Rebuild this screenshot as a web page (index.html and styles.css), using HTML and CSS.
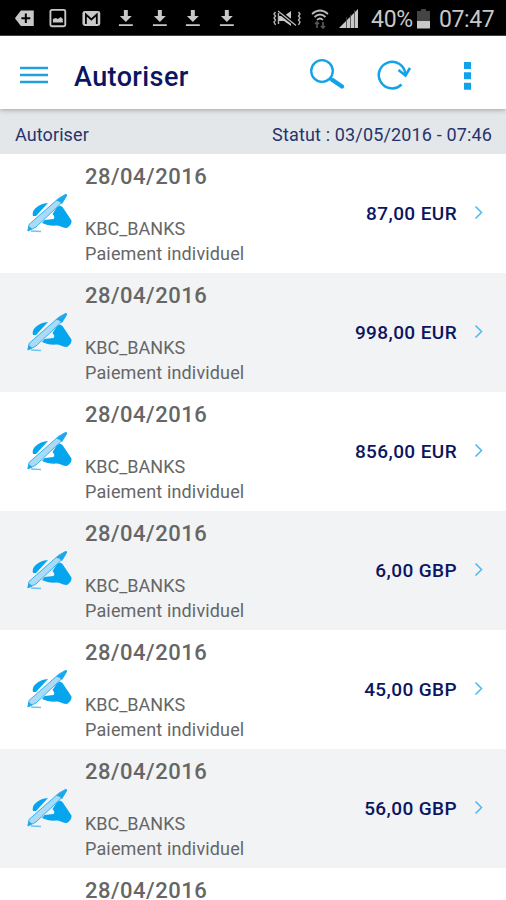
FILE: index.html
```html
<!DOCTYPE html>
<html lang="fr">
<head>
    <meta charset="utf-8">
    <title>Autoriser</title>
    <link rel="stylesheet" href="styles.css">
</head>
<body>
    <!-- Shared icons -->
    <svg class="sprite" width="0" height="0">
        <symbol id="download" viewBox="0 0 34 20">
            <path d="M15 2h4v6h4l-6 6-6-6h4z"/>
            <path d="M10 16.4h14v1.8H10z"/>
        </symbol>
        <symbol id="sign" viewBox="0 0 46 42">
            <path d="M7 23C5 17 12 11 22 10L10 23z" fill="#06a6ee"/>
            <path d="M31 14l3-1.500 2.500 1.500L45.500 27.500q.5 4-4.500 7.500c-4 0-6-2-10-2.500-6 .5-11-.5-15-2.500l2.500-3 9-1q2-2-1-5z" fill="#06a6ee"/>
            <path d="M3 31.500L33 5l6.500-3.500 1 1-3.500 6L10 34l-8 4z" fill="#a9daf8" stroke="#35b2ef" stroke-width="1"/>
            <path d="M30 7.500l10-6.500q1.500 0 1 1.500L36 11q-2-3-6-3.500zM1.500 38l1-5 4 3z" fill="#1ca8ed"/>
            <path d="M5 38l10 .5" stroke="#6cc4f2" stroke-width="1.300" fill="none"/>
        </symbol>
        <symbol id="chevron" viewBox="0 0 9 15">
            <path d="M1.500 1.500l6 6-6 6" fill="none" stroke="#4db8ee" stroke-width="1.500"/>
        </symbol>
    </svg>

    <div class="status-bar">
        <div class="notifications">
            <svg viewBox="0 0 34 20"><path d="M13 2.500h13v15.500H13l-6-7.700z"/><path d="M18 5.500v9.500M13.500 10.200h9" stroke="#000" stroke-width="2"/></svg>
            <svg viewBox="0 0 34 20"><rect x="8.500" y="1.800" width="15" height="16.500" rx="1.500" fill="none" stroke="#c8c8c8" stroke-width="1.900"/><path d="M11 14.500V11l3-1 2 1 3-2 2 2v3.500z"/></svg>
            <svg viewBox="0 0 34 20"><rect x="7.500" y="3" width="18" height="15" rx="2.500"/><path d="M11 16V6.500l5.500 5 5.500-5V16" fill="none" stroke="#000" stroke-width="1.800"/></svg>
            <svg><use href="#download"/></svg>
            <svg><use href="#download"/></svg>
            <svg><use href="#download"/></svg>
            <svg><use href="#download"/></svg>
        </div>
        <div class="system">
            <svg class="mute" viewBox="0 0 28 18"><path d="M6 6h5l7-5v15l-7-5H6z"/><path d="M5 1l19 15" stroke="#000" stroke-width="4"/><path d="M5 1l18 14.500M2.500 2L1 4l1.500 2L1 8l1.500 2L1 12l1.500 3M25.500 2L27 4l-1.500 2L27 8l-1.500 2L27 12l-1.500 3M5.500 3v11" fill="none" stroke="#b4b4b4" stroke-width="1.400"/></svg>
            <svg class="wifi" viewBox="0 0 18 20"><path d="M1 5q8-7 16 0M3.500 8q5.500-5 11 0M6 11q3-3 6 0" fill="none" stroke="#bbb" stroke-width="1.700"/><path d="M6 19v-6M4 15l2-2 2 2M12 13v6M10 17l2 2 2-2" fill="none" stroke="#555" stroke-width="1.700"/></svg>
            <svg class="signal" viewBox="0 0 20 20"><path d="M0 19L19 0v19z"/><path d="M7.500 8v11M11.500 5v14M15.500 1v18" stroke="#444" stroke-width=".8"/></svg>
            <span class="percent">40%</span>
            <svg class="battery" viewBox="0 0 13 20"><path d="M4 0h5v2h4v10H0V2h4z" fill="#444"/><path d="M0 12h13v7.500H0z"/></svg>
            <span class="clock">07:47</span>
        </div>
    </div>

    <header class="toolbar">
        <svg class="menu" viewBox="0 0 28 18"><path d="M0 2h28M0 9h28M0 16h28" stroke="#249fdd" stroke-width="2.400"/></svg>
        <h1>Autoriser</h1>
        <svg class="search" viewBox="0 0 36 30"><circle cx="13" cy="12" r="10.800" fill="none" stroke="#12a2e8" stroke-width="2.300"/><path d="M21 19.500l2.500 2" stroke="#12a2e8" stroke-width="3"/><path d="M23.500 21l9.500 6.500" stroke="#12a2e8" stroke-width="4.200" stroke-linecap="round"/></svg>
        <svg class="refresh" viewBox="0 0 34 32"><path d="M24.500 25.500A13.300 13.300 0 1 1 28.300 14.500" fill="none" stroke="#12a2e8" stroke-width="2.500"/><path d="M21.500 11l7 5.500 4.500-7.500" fill="none" stroke="#12a2e8" stroke-width="2.600"/></svg>
        <svg class="more" viewBox="0 0 7 28"><path d="M0 0h7v7H0zM0 10.300h7v7H0zM0 20.700h7v7H0z" fill="#12a2e8"/></svg>
    </header>

    <div class="sub-header">
        <span class="section">Autoriser</span>
        <span class="status">Statut : 03/05/2016 - 07:46</span>
    </div>

    <ul class="payments">
        <li class="payment">
            <svg class="sign"><use href="#sign"/></svg>
            <div class="details">
                <h2>28/04/2016</h2>
                <p class="bank">KBC_BANKS</p>
                <p class="type">Paiement individuel</p>
            </div>
            <span class="amount">87,00 EUR</span>
            <svg class="chevron"><use href="#chevron"/></svg>
        </li>
        <li class="payment">
            <svg class="sign"><use href="#sign"/></svg>
            <div class="details">
                <h2>28/04/2016</h2>
                <p class="bank">KBC_BANKS</p>
                <p class="type">Paiement individuel</p>
            </div>
            <span class="amount">998,00 EUR</span>
            <svg class="chevron"><use href="#chevron"/></svg>
        </li>
        <li class="payment">
            <svg class="sign"><use href="#sign"/></svg>
            <div class="details">
                <h2>28/04/2016</h2>
                <p class="bank">KBC_BANKS</p>
                <p class="type">Paiement individuel</p>
            </div>
            <span class="amount">856,00 EUR</span>
            <svg class="chevron"><use href="#chevron"/></svg>
        </li>
        <li class="payment">
            <svg class="sign"><use href="#sign"/></svg>
            <div class="details">
                <h2>28/04/2016</h2>
                <p class="bank">KBC_BANKS</p>
                <p class="type">Paiement individuel</p>
            </div>
            <span class="amount">6,00 GBP</span>
            <svg class="chevron"><use href="#chevron"/></svg>
        </li>
        <li class="payment">
            <svg class="sign"><use href="#sign"/></svg>
            <div class="details">
                <h2>28/04/2016</h2>
                <p class="bank">KBC_BANKS</p>
                <p class="type">Paiement individuel</p>
            </div>
            <span class="amount">45,00 GBP</span>
            <svg class="chevron"><use href="#chevron"/></svg>
        </li>
        <li class="payment">
            <svg class="sign"><use href="#sign"/></svg>
            <div class="details">
                <h2>28/04/2016</h2>
                <p class="bank">KBC_BANKS</p>
                <p class="type">Paiement individuel</p>
            </div>
            <span class="amount">56,00 GBP</span>
            <svg class="chevron"><use href="#chevron"/></svg>
        </li>
        <li class="payment partial">
            <div class="details">
                <h2>28/04/2016</h2>
            </div>
        </li>
    </ul>
</body>
</html>
```
FILE: styles.css
```css
* {
    box-sizing: border-box;
    margin: 0;
    padding: 0;
}

body {
    display: flex;
    flex-direction: column;
    height: 900px;
    overflow: hidden;
    background: #fff;
    font-family: Roboto, "Liberation Sans", sans-serif;
}

svg {
    display: block;
    flex: none;
}

.sprite {
    position: absolute;
}

/* Phone status bar */
.status-bar {
    display: flex;
    flex: none;
    justify-content: space-between;
    height: 36px;
    padding: 0 12px 0 8px;
    background: #000;
    border-bottom: 1px solid #444;
    color: #c8c8c8;
    fill: #c8c8c8;
}

.notifications {
    display: flex;
    padding-top: 8px;
}

.notifications svg {
    width: 33.7px;
    height: 20px;
}

.system {
    display: flex;
    align-items: center;
    padding-top: 2px;
    font-size: 23px;
    white-space: nowrap;
}

.mute {
    width: 28px;
    height: 18px;
    margin-right: 10px;
}

.wifi {
    width: 18px;
    height: 20px;
    margin-right: 10px;
}

.signal {
    width: 20px;
    height: 20px;
    margin-right: 12px;
}

.percent {
    width: 41px;
    padding-top: 2px;
    letter-spacing: -0.3px;
}

.battery {
    width: 13px;
    height: 20px;
    margin: 0 9px 0 5px;
}

.clock {
    width: 55px;
    padding-top: 2px;
    letter-spacing: -0.4px;
}

/* App toolbar */
.toolbar {
    display: flex;
    position: relative;
    flex: none;
    align-items: center;
    height: 73px;
    padding: 0 35px 0 20px;
    background: #fff;
    box-shadow: 0 1px 5px rgba(0, 0, 0, 0.3);
}

.menu {
    width: 28px;
    height: 18px;
    margin-top: 5px;
}

.toolbar h1 {
    flex: 1;
    margin: 8px 0 0 26px;
    color: #0b1560;
    font-size: 27px;
    font-weight: 500;
    line-height: 32px;
    letter-spacing: 0.4px;
}

.search {
    width: 36px;
    height: 30px;
    margin: 3px 32px 0 0;
}

.refresh {
    width: 34px;
    height: 32px;
    margin: 5px 53px 0 0;
}

.more {
    width: 7px;
    height: 28px;
    margin-top: 6px;
}

.sub-header {
    display: flex;
    flex: none;
    align-items: center;
    justify-content: space-between;
    height: 45px;
    padding: 6px 14px 0 15px;
    background: #e3e7ea;
    color: #26346b;
    font-size: 18px;
}

.section {
    letter-spacing: 0.1px;
}

.status {
    letter-spacing: 0.15px;
}

/* Payment list */
.payments {
    list-style: none;
}

.payment {
    display: flex;
    height: 119px;
    padding-right: 23px;
    background: #fff;
}

.payment:nth-child(even) {
    background: #f1f3f5;
}

.sign {
    width: 46px;
    height: 42px;
    margin: 39px 13px 0 26px;
}

.details {
    flex: 1;
    color: #666;
}

.details h2 {
    margin-bottom: 31px;
    padding-top: 15px;
    font-size: 22px;
    font-weight: 500;
    line-height: 16px;
    letter-spacing: 0.5px;
}

.details p {
    font-size: 18px;
    line-height: 25px;
}

.type {
    letter-spacing: 0.15px;
}

.amount {
    margin-top: 47px;
    color: #0b1560;
    font-size: 19px;
    font-weight: 500;
    line-height: 26px;
    letter-spacing: 0.4px;
}

.chevron {
    width: 9px;
    height: 15px;
    margin: 51px 0 0 17px;
}

/* Last row, only its date is visible */
.partial {
    height: 32px;
    padding-left: 85px;
}

.partial h2 {
    margin-bottom: 0;
}
```
